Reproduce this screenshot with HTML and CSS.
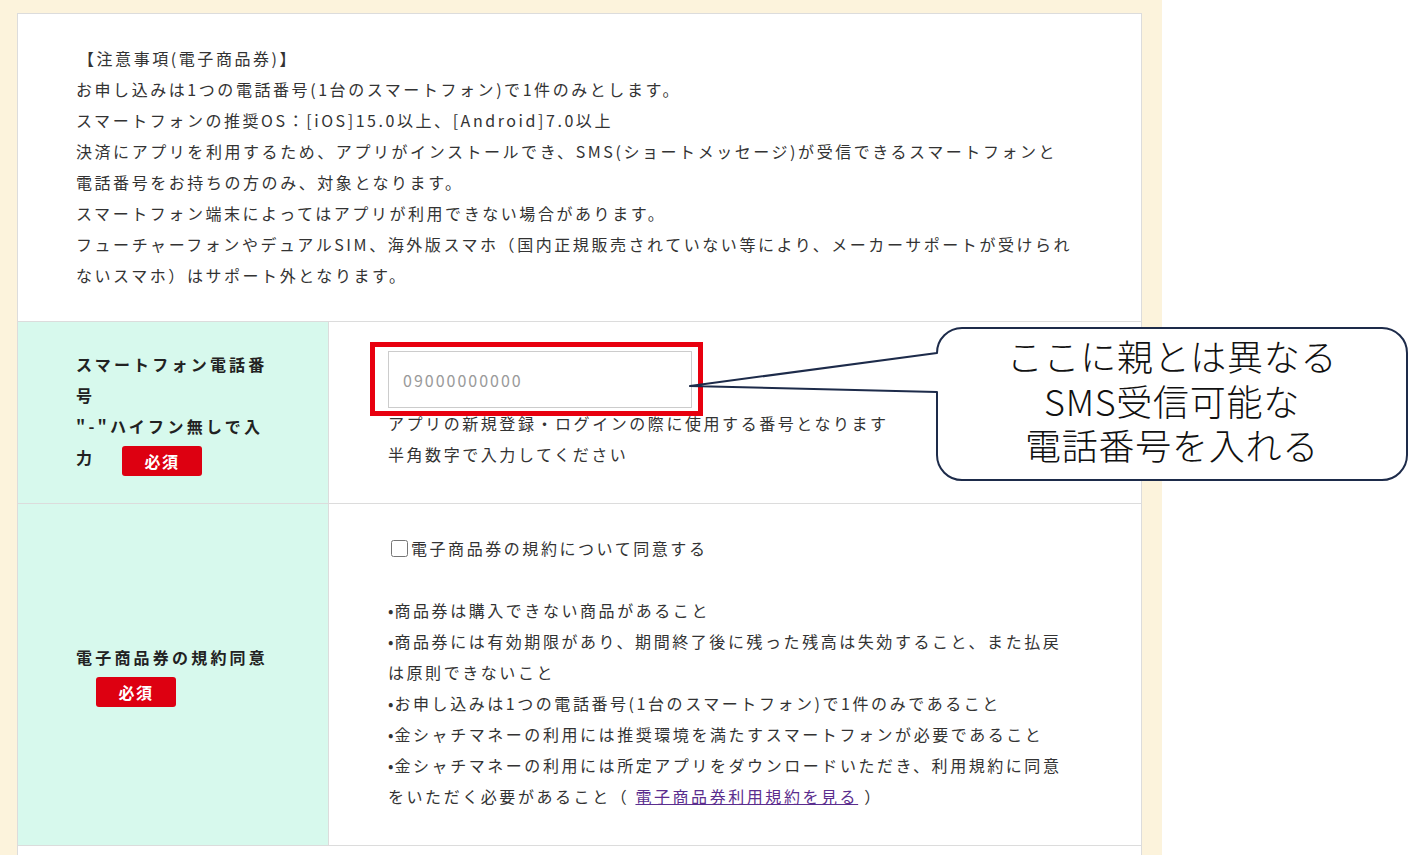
FILE: index.html
```html
<!DOCTYPE html>
<html lang="ja">
<head>
  <meta charset="UTF-8" />
  <meta name="viewport" content="width=device-width, initial-scale=1.0" />
  <title>電子商品券 お申し込み</title>
  <link rel="stylesheet" href="styles.css">
</head>
<body>
  <div class="screen">
    <div class="page">
      <div class="form-card">
        <div class="notes">
          <p class="notes-title">【注意事項(電子商品券)】</p>
          <p>お申し込みは1つの電話番号(1台のスマートフォン)で1件のみとします。</p>
          <p>スマートフォンの推奨OS：[iOS]15.0以上、[Android]7.0以上</p>
          <p>決済にアプリを利用するため、アプリがインストールでき、SMS(ショートメッセージ)が受信できるスマートフォンと<br>電話番号をお持ちの方のみ、対象となります。</p>
          <p>スマートフォン端末によってはアプリが利用できない場合があります。</p>
          <p>フューチャーフォンやデュアルSIM、海外版スマホ（国内正規販売されていない等により、メーカーサポートが受けられないスマホ）はサポート外となります。</p>
        </div>

        <div class="form-row">
          <div class="form-label">
            <div>スマートフォン電話番号<br>"-"ハイフン無しで入力 <span class="required">必須</span></div>
          </div>
          <div class="form-field">
            <input type="tel" class="tel-input" placeholder="09000000000" />
            <p>アプリの新規登録・ログインの際に使用する番号となります</p>
            <p>半角数字で入力してください</p>
          </div>
        </div>

        <div class="form-row">
          <div class="form-label">
            <div>電子商品券の規約同意<br><span class="required">必須</span></div>
          </div>
          <div class="form-field">
            <label class="agree"><input type="checkbox" />電子商品券の規約について同意する</label>
            <ul class="terms">
              <li>商品券は購入できない商品があること</li>
              <li>商品券には有効期限があり、期間終了後に残った残高は失効すること、また払戻は原則できないこと</li>
              <li>お申し込みは1つの電話番号(1台のスマートフォン)で1件のみであること</li>
              <li>金シャチマネーの利用には推奨環境を満たすスマートフォンが必要であること</li>
              <li>金シャチマネーの利用には所定アプリをダウンロードいただき、利用規約に同意をいただく必要があること（ <a href="#">電子商品券利用規約を見る</a> ）</li>
            </ul>
          </div>
        </div>

        <div class="form-row-next"></div>
      </div>
    </div>

    <!-- annotation overlay -->
    <div class="mark-box"></div>
    <svg class="callout" width="729" height="168" viewBox="0 0 729 168">
      <path d="M257 33 L10 66 L257 72 L257 135 A25 25 0 0 0 282 160 L702 160 A25 25 0 0 0 727 135 L727 33 A25 25 0 0 0 702 8 L282 8 A25 25 0 0 0 257 33 Z" fill="#fff" stroke="#1d2b4a" stroke-width="2" stroke-linejoin="round"/>
    </svg>
    <div class="callout-text">ここに親とは異なる<br>SMS受信可能な<br>電話番号を入れる</div>
  </div>
</body>
</html>
```

FILE: styles.css
```css
*,*::before,*::after{box-sizing:border-box;margin:0;padding:0;}
body{background:#fff;color:#333;font-family:"Noto Sans CJK JP","Noto Sans",sans-serif;font-size:16px;}
a{color:#5b2d8e;text-decoration:underline;}

.screen{position:relative;width:1409px;height:855px;overflow:hidden;}
.page{width:1162px;min-height:855px;background:#fcf3dc;padding:13px 20px 0 17px;}
.form-card{background:#fff;border:1px solid #dcdcdc;}

.notes{padding:29px 56px 30px 58px;line-height:31px;letter-spacing:.16em;}
.notes-title{margin-left:2px;}

.form-row{display:grid;grid-template-columns:311px 1fr;border-top:1px solid #dcdcdc;}
.form-label{display:flex;align-items:center;background:#d7f9ed;border-right:1px solid #dcdcdc;padding:0 52px 0 58px;font-weight:700;color:#222;line-height:31px;letter-spacing:.2em;}
.required{display:inline-block;width:80px;height:30px;margin-left:20px;background:#dd0011;color:#fff;border-radius:3px;text-align:center;line-height:30px;font-size:16px;vertical-align:middle;letter-spacing:.1em;}
.form-label br + .required{margin-top:2px;}

.form-field{padding:29px 70px 33px 59px;line-height:31px;letter-spacing:.16em;}
.tel-input{display:block;width:304px;height:57px;border:1px solid #ccc;padding:0 14px;font-family:inherit;font-size:16px;letter-spacing:2px;color:#333;outline:none;}
.tel-input::placeholder{color:#9a9a9a;}

.agree{display:flex;align-items:center;margin-bottom:31px;}
.agree input{width:17px;height:17px;margin:0 3px 0 3px;}
.terms{list-style:none;}
.terms li::before{content:"•";letter-spacing:0;margin-right:1px;}

.form-row-next{border-top:1px solid #dcdcdc;height:40px;}

.mark-box{position:absolute;left:370px;top:342px;width:333px;height:74px;border:5px solid #e8000f;}
.callout{position:absolute;left:680px;top:320px;}
.callout-text{position:absolute;left:937px;top:324px;width:470px;height:152px;display:flex;align-items:center;justify-content:center;text-align:center;font-size:36px;font-weight:300;line-height:44.5px;color:#111;letter-spacing:.02em;}
```
